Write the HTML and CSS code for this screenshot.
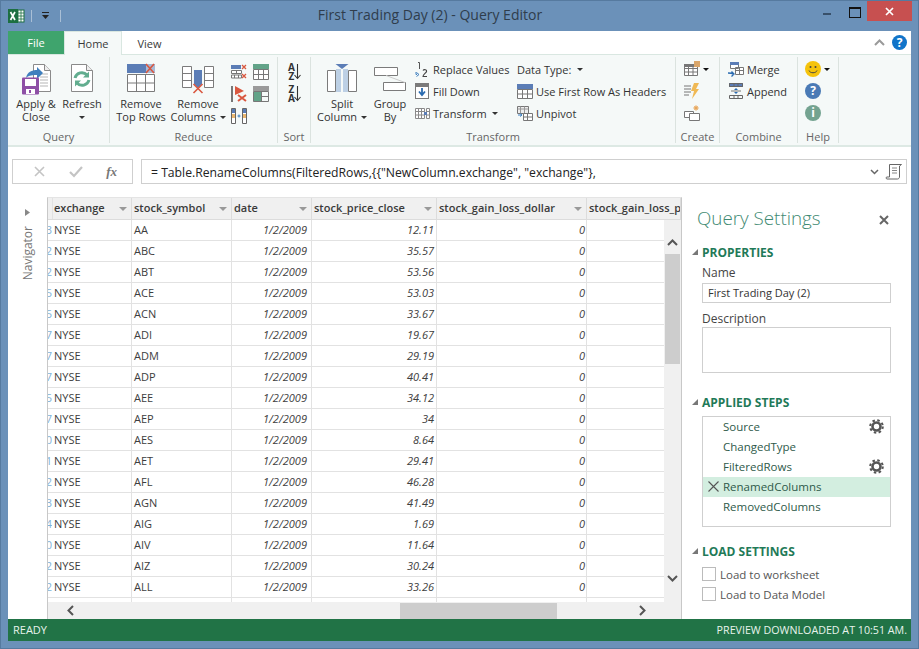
FILE: index.html
```html
<!DOCTYPE html>
<html lang="en">
<head>
<meta charset="utf-8">
<title>First Trading Day (2) - Query Editor</title>
<link rel="stylesheet" href="styles.css">
</head>
<body>
<div class="app">
  <header class="titlebar">
    <div class="qat">
      <svg class="xl" width="17" height="16" viewBox="0 0 17 16"><rect x="6" y="2" width="10" height="12" fill="#fff" stroke="#1d6f42"/><path d="M10 2v12M13 2v12M6 5h10M6 8h10M6 11h10" stroke="#1d6f42" stroke-width=".8"/><rect x="0" y="1" width="10" height="14" fill="#1d6f42"/><path d="M2.500 4l4.500 8M7 4l-4.500 8" stroke="#fff" stroke-width="1.700"/></svg>
      <span class="qat-sep"></span>
      <svg width="9" height="8" viewBox="0 0 9 8"><path d="M1 0h7v1H1zM1 3h7L4.500 7z" fill="#222"/></svg>
      <span class="qat-sep second"></span>
    </div>
    <div class="title">First Trading Day (2) - Query Editor</div>
    <div class="winbtns">
      <span class="wb min"></span>
      <span class="wb max"></span>
      <span class="wb close"><svg width="9" height="9" viewBox="0 0 9 9"><path d="M1 1l7 7M8 1L1 8" stroke="#fff" stroke-width="1.700"/></svg></span>
    </div>
  </header>

  <div class="inner">
    <nav class="tabs">
      <span class="tab file">File</span>
      <span class="tab home">Home</span>
      <span class="tab view">View</span>
      <span class="tabs-right">
        <svg width="11" height="7" viewBox="0 0 11 7"><path d="M1 6l4.500-4.500L10 6" fill="none" stroke="#9a9a9a" stroke-width="2"/></svg>
        <span class="help-round">?</span>
      </span>
    </nav>

    <section class="ribbon">
      <div class="group g-query">
        <div class="gbody">
          <div class="large w46">
            <svg class="licon" width="32" height="32" viewBox="0 0 32 32"><path d="M13.500 1.500h11l6 6v21h-17z" fill="#fff" stroke="#8a8a8a"/><path d="M24.500 1.500v6h6" fill="#eee" stroke="#8a8a8a"/><path d="M20 11h8M20 14h8M20 17h8M20 20h8M20 23h8" stroke="#b5b5b5"/><path d="M6 15c1-6 6-8 11-8V4l6 6-6 6v-4c-4 0-8 0-11 3z" fill="#3f7fbe"/><rect x="2" y="14.500" width="17" height="17" rx="1" fill="#8e4fa6"/><rect x="5" y="16" width="11" height="7" fill="#fff"/><rect x="6" y="26" width="9" height="5" fill="#fff"/><rect x="9" y="27" width="2" height="3" fill="#8e4fa6"/></svg>
            <span class="ltext">Apply &amp;<br>Close</span>
          </div>
          <div class="large w46">
            <svg class="licon" width="32" height="32" viewBox="0 0 32 32"><path d="M5.500 1.500h15l6 6v21h-21z" fill="#fff" stroke="#8a8a8a"/><path d="M20.500 1.500v6h6" fill="#eee" stroke="#8a8a8a"/><path d="M9 15a7 7 0 0 1 12-3" fill="none" stroke="#62ad8f" stroke-width="3"/><path d="M23 8.500v6h-6z" fill="#62ad8f"/><path d="M23 17a7 7 0 0 1-12 3" fill="none" stroke="#62ad8f" stroke-width="3"/><path d="M9 23.500v-6h6z" fill="#62ad8f"/></svg>
            <span class="ltext">Refresh<br><i class="caret"></i></span>
          </div>
        </div>
        <div class="glabel">Query</div>
      </div>

      <div class="group g-reduce">
        <div class="gbody">
          <div class="large w62">
            <svg class="licon" width="32" height="32" viewBox="0 0 32 32"><rect x="2" y="1" width="19" height="9" fill="#5b7db6"/><rect x="21" y="1" width="9" height="9" fill="#5b7db6" opacity=".5"/><path d="M21 1l8 9M29 1l-8 9" stroke="#d9573f" stroke-width="1.600"/><path d="M2.500 11.500h27v17h-27zM2.500 20h27M11.500 11.500v17M20.500 11.500v17" fill="#fff" stroke="#7b7b7b"/></svg>
            <span class="ltext">Remove<br>Top Rows</span>
          </div>
          <div class="large w52">
            <svg class="licon" width="32" height="32" viewBox="0 0 32 32"><path d="M.500 3.500h9v21h-9zM.500 10.500h9M.500 17.500h9M22.500 3.500h9v21h-9zM22.500 10.500h9M22.500 17.500h9" fill="#fff" stroke="#7b7b7b"/><path d="M12 7h8v14l-4 4-4-4z" fill="#5b7db6"/><path d="M11.500 21l9 9M20.500 21l-9 9" stroke="#d9573f" stroke-width="1.600"/></svg>
            <span class="ltext">Remove<br>Columns <i class="caret inline"></i></span>
          </div>
          <div class="mini-grid">
            <svg width="16" height="16" viewBox="0 0 16 16"><rect x="0" y="1" width="10" height="4" fill="#5b7db6"/><path d="M11 1l4 4M15 1l-4 4M11 10l4 4M15 10l-4 4" stroke="#d9573f" stroke-width="1.300"/><path d="M.500 6.500h10v3H.500zM.500 11h10v3H.500zM5.500 6.500v3M3.500 11v3M7.500 11v3" fill="#fff" stroke="#777"/></svg>
            <svg width="16" height="16" viewBox="0 0 16 16"><rect x="0" y="0" width="16" height="5" fill="#62a388"/><path d="M.500 5.500h15v10H.500zM.500 10.500h15M5.500 5.500v10M10.500 5.500v10" fill="#fff" stroke="#777"/></svg>
            <svg width="16" height="16" viewBox="0 0 16 16"><rect x="0" y="0" width="2" height="16" fill="#777"/><path d="M4 0l9 5-9 4z" fill="#d9573f"/><path d="M7 9l8 6M15 9l-8 6" stroke="#d9573f" stroke-width="2"/></svg>
            <svg width="16" height="16" viewBox="0 0 16 16"><rect x="0" y="0" width="16" height="5" fill="#9a9a9a"/><rect x=".5" y="5.500" width="8" height="10" fill="#62a388"/><path d="M.500 5.500h15v10H.500zM8.500 5.500v10M8.500 10.500h7" fill="none" stroke="#777"/></svg>
            <svg width="16" height="16" viewBox="0 0 16 16"><path d="M.500.500h4v15h-4zM11.500.500h4v15h-4z" fill="#fff" stroke="#666"/><path d="M1 1h3v4H1zM12 1h3v4h-3z" fill="#5b7db6"/><path d="M1 6h3v4H1zM12 6h3v4h-3z" fill="#eab66f"/><path d="M6.500 8h3M8 6.500v3" stroke="#3f7fbe"/></svg>
          </div>
        </div>
        <div class="glabel">Reduce</div>
      </div>

      <div class="group g-sort">
        <div class="gbody">
          <div class="sort-icons">
            <svg width="15" height="17" viewBox="0 0 15 17"><path d="M10.500 1v14M7.500 12l3 3.500 3-3.500" fill="none" stroke="#333" stroke-width="1.100"/></svg>
            <svg width="15" height="17" viewBox="0 0 15 17"><path d="M10.500 1v14M7.500 12l3 3.500 3-3.500" fill="none" stroke="#333" stroke-width="1.100"/></svg>
            <span class="az one">A<br>Z</span>
            <span class="az two">Z<br>A</span>
          </div>
        </div>
        <div class="glabel">Sort</div>
      </div>

      <div class="group g-transform">
        <div class="gbody">
          <div class="large w46">
            <svg class="licon" width="32" height="32" viewBox="0 0 32 32"><path d="M1.500 7.500h8v21h-8zM22.500 7.500h8v21h-8z" fill="#fff" stroke="#7b7b7b"/><rect x="10" y="6" width="5" height="23" fill="#bdd0e5"/><rect x="17" y="6" width="5" height="23" fill="#bdd0e5"/><path d="M9.500 1h13L16 6z" fill="#5b7db6"/></svg>
            <span class="ltext">Split<br>Column <i class="caret inline"></i></span>
          </div>
          <div class="large w50">
            <svg class="licon" width="32" height="32" viewBox="0 0 32 32"><path d="M.500 4.500h23v8h-23zM9.500 19.500h22v8h-22z" fill="#fff" stroke="#7b7b7b"/><path d="M12 12.500l19 7" stroke="#ccc"/></svg>
            <span class="ltext">Group<br>By</span>
          </div>
          <div class="slist c1">
            <div class="sitem"><span class="sicon"><svg width="14" height="15" viewBox="0 0 14 15"><path d="M3 .500h1.500V7" fill="none" stroke="#555"/><path d="M1.500 14.500l2.500-2-2.500-2M2 12.500h-1V10" fill="none" stroke="#3f7fbe"/><path d="M8 8.500c1-1.500 4-1 3.500 1-.4 1.500-3.500 3-3.500 5h4" fill="none" stroke="#444" stroke-width="1.100"/></svg></span>Replace Values</div>
            <div class="sitem"><span class="sicon"><svg width="14" height="16" viewBox="0 0 14 16"><rect x="0" y="0" width="14" height="3" fill="#7b7b7b"/><rect x=".5" y="3.500" width="13" height="12" fill="#fff" stroke="#7b7b7b"/><path d="M7 5v6M4 8.500l3 3.500 3-3.500" fill="none" stroke="#2a6bb0" stroke-width="1.800"/></svg></span>Fill Down</div>
            <div class="sitem"><span class="sicon"><svg width="15" height="11" viewBox="0 0 15 11"><path d="M.500.500h9v10h-9zM.500 3.500h9M.500 7h9M3.500.500v10M6.500.500v10M11.500.500h3v10h-3zM11.500 3.500h3M11.500 7h3" fill="#fff" stroke="#8a8a8a"/><rect x="9" y="4" width="3" height="3" fill="#5b7db6"/></svg></span>Transform <i class="caret inline"></i></div>
          </div>
          <div class="slist c2">
            <div class="sitem">Data Type: <i class="caret inline dt"></i></div>
            <div class="sitem"><span class="sicon wide"><svg width="16" height="15" viewBox="0 0 16 15"><rect x="0" y="0" width="16" height="5" fill="#5b7db6"/><path d="M.500 5.500h15v9H.500zM.500 10h15M5.500 5.500v9M10.500 5.500v9" fill="#fff" stroke="#777"/></svg></span>Use First Row As Headers</div>
            <div class="sitem"><span class="sicon wide"><svg width="16" height="15" viewBox="0 0 16 15"><path d="M.500.500h11v7H.500z" fill="#eee" stroke="#777"/><path d="M.500 3h11M3.500.500v7M7.500.500v7" stroke="#999"/><path d="M6.500 7.500h9v7h-9zM6.500 11h9M10.500 7.500v7" fill="#fff" stroke="#777"/><path d="M1 9h4M3 7.500L5 9l-2 1.500" fill="none" stroke="#3f7fbe"/></svg></span>Unpivot</div>
          </div>
        </div>
        <div class="glabel">Transform</div>
      </div>

      <div class="group g-create">
        <div class="gbody">
          <div class="slist">
            <div class="sitem"><span class="sicon ci"><svg width="16" height="16" viewBox="0 0 16 16"><path d="M.500 3.500h13v11H.500zM.500 7.500h13M.500 11h13M4.500 3.500v11M9 3.500v11" fill="#fff" stroke="#777"/><rect x="0" y="3" width="14" height="3" fill="#777"/><rect x="10" y="0" width="6" height="6" fill="#d9a66b"/></svg></span><i class="caret inline dark"></i></div>
            <div class="sitem"><span class="sicon ci"><svg width="16" height="16" viewBox="0 0 16 16"><path d="M0 3h7M0 6h7M0 9h7M0 12h5" stroke="#777"/><path d="M10 0h5l-3 6h3L8 16l2-8H7z" fill="#f0b954"/></svg></span></div>
            <div class="sitem"><span class="sicon ci"><svg width="16" height="16" viewBox="0 0 16 16"><path d="M.500 6.500h9v6H.500z" fill="#fff" stroke="#777"/><path d="M5.500 8.500h10v7h-10z" fill="#fff" stroke="#777"/><circle cx="12" cy="3" r="1.800" fill="#e8a75c"/><path d="M12 0v6M9 3h6M10 1l4 4M14 1l-4 4" stroke="#e8a75c" stroke-width=".7"/></svg></span></div>
          </div>
        </div>
        <div class="glabel">Create</div>
      </div>

      <div class="group g-combine">
        <div class="gbody">
          <div class="slist">
            <div class="sitem"><span class="sicon cb"><svg width="16" height="15" viewBox="0 0 16 15"><rect x="2" y="0" width="8" height="3" fill="#5b7db6"/><path d="M2.500.500h8v6h-8zM7.500 5.500h8v7h-8zM7.500 8.500h8M11.500 5.500v7" fill="#fff" stroke="#777"/><rect x="2" y="0" width="9" height="3" fill="#5b7db6"/><path d="M0 11c3 0 4 0 5 1M3.500 9.500L6 12l-2.500 2.500" fill="none" stroke="#2a6bb0" stroke-width="1.300"/></svg></span>Merge</div>
            <div class="sitem"><span class="sicon cb"><svg width="16" height="16" viewBox="0 0 16 16"><rect x="1" y="0" width="14" height="4" fill="#5b7db6"/><path d="M1.500.500h13v3h-13zM1.500 12.500h13v3h-13zM6 .500v3M10 .500v3M6 12.500v3M10 12.500v3" fill="none" stroke="#666"/><path d="M8 5l2 2H6zM8 11l2-2H6z" fill="#2a6bb0"/><path d="M3 8h10" stroke="#777"/></svg></span>Append</div>
          </div>
        </div>
        <div class="glabel">Combine</div>
      </div>

      <div class="group g-help">
        <div class="gbody">
          <div class="slist">
            <div class="sitem"><span class="sicon hi"><svg width="16" height="16" viewBox="0 0 16 16"><circle cx="8" cy="8" r="8" fill="#f5c30b"/><circle cx="5.500" cy="6" r="1" fill="#444"/><circle cx="10.500" cy="6" r="1" fill="#444"/><path d="M4 9.500c1 3 7 3 8 0" fill="none" stroke="#444"/></svg></span><i class="caret inline dark"></i></div>
            <div class="sitem"><span class="round-icon blue">?</span></div>
            <div class="sitem"><span class="round-icon green">i</span></div>
          </div>
        </div>
        <div class="glabel">Help</div>
      </div>
    </section>

    <section class="formula">
      <div class="fbtns">
        <svg width="11" height="11" viewBox="0 0 11 11"><path d="M1 1l9 9M10 1l-9 9" stroke="#c4c4c4" stroke-width="1.600"/></svg>
        <svg width="14" height="12" viewBox="0 0 14 12"><path d="M1 6l4 4 8-9" fill="none" stroke="#c4c4c4" stroke-width="2.200"/></svg>
        <span class="fx">fx</span>
      </div>
      <div class="fbox">
        <span class="ftext">= Table.RenameColumns(FilteredRows,{{"NewColumn.exchange", "exchange"},</span>
        <svg class="fchev" width="9" height="6" viewBox="0 0 9 6"><path d="M1 1l3.500 3.500L8 1" fill="none" stroke="#666" stroke-width="1.500"/></svg>
        <svg class="fscroll" width="17" height="16" viewBox="0 0 17 16"><path d="M4.500.500h12l-2 1.500v11c0 1-1 2-2 2H2c-1 0-1.500-2 0-2h2.500z" fill="#fff" stroke="#666"/><path d="M7 4h5M7 6.500h5M7 9h5" stroke="#888"/></svg>
      </div>
    </section>

    <main class="main">
      <aside class="nav">
        <svg class="nav-chev" width="5" height="7" viewBox="0 0 5 7"><path d="M0 0l5 3.500L0 7z" fill="#888"/></svg>
        <span class="nav-text">Navigator</span>
      </aside>

      <section class="grid">
        <div class="row head">
          <div></div>
          <div class="hc">exchange<i class="filt"></i></div>
          <div class="hc">stock_symbol<i class="filt"></i></div>
          <div class="hc">date<i class="filt"></i></div>
          <div class="hc">stock_price_close<i class="filt"></i></div>
          <div class="hc">stock_gain_loss_dollar<i class="filt"></i></div>
          <div class="hc">stock_gain_loss_percent</div>
        </div>
        <div class="gmid">
          <div class="rows">
            <div class="row"><div class="rn">3</div><div>NYSE</div><div>AA</div><div class="it">1/2/2009</div><div class="it">12.11</div><div class="it">0</div><div></div></div>
            <div class="row"><div class="rn">2</div><div>NYSE</div><div>ABC</div><div class="it">1/2/2009</div><div class="it">35.57</div><div class="it">0</div><div></div></div>
            <div class="row"><div class="rn">2</div><div>NYSE</div><div>ABT</div><div class="it">1/2/2009</div><div class="it">53.56</div><div class="it">0</div><div></div></div>
            <div class="row"><div class="rn">5</div><div>NYSE</div><div>ACE</div><div class="it">1/2/2009</div><div class="it">53.03</div><div class="it">0</div><div></div></div>
            <div class="row"><div class="rn">5</div><div>NYSE</div><div>ACN</div><div class="it">1/2/2009</div><div class="it">33.67</div><div class="it">0</div><div></div></div>
            <div class="row"><div class="rn">7</div><div>NYSE</div><div>ADI</div><div class="it">1/2/2009</div><div class="it">19.67</div><div class="it">0</div><div></div></div>
            <div class="row"><div class="rn">7</div><div>NYSE</div><div>ADM</div><div class="it">1/2/2009</div><div class="it">29.19</div><div class="it">0</div><div></div></div>
            <div class="row"><div class="rn">7</div><div>NYSE</div><div>ADP</div><div class="it">1/2/2009</div><div class="it">40.41</div><div class="it">0</div><div></div></div>
            <div class="row"><div class="rn">5</div><div>NYSE</div><div>AEE</div><div class="it">1/2/2009</div><div class="it">34.12</div><div class="it">0</div><div></div></div>
            <div class="row"><div class="rn">7</div><div>NYSE</div><div>AEP</div><div class="it">1/2/2009</div><div class="it">34</div><div class="it">0</div><div></div></div>
            <div class="row"><div class="rn">0</div><div>NYSE</div><div>AES</div><div class="it">1/2/2009</div><div class="it">8.64</div><div class="it">0</div><div></div></div>
            <div class="row"><div class="rn">1</div><div>NYSE</div><div>AET</div><div class="it">1/2/2009</div><div class="it">29.41</div><div class="it">0</div><div></div></div>
            <div class="row"><div class="rn">2</div><div>NYSE</div><div>AFL</div><div class="it">1/2/2009</div><div class="it">46.28</div><div class="it">0</div><div></div></div>
            <div class="row"><div class="rn">3</div><div>NYSE</div><div>AGN</div><div class="it">1/2/2009</div><div class="it">41.49</div><div class="it">0</div><div></div></div>
            <div class="row"><div class="rn">4</div><div>NYSE</div><div>AIG</div><div class="it">1/2/2009</div><div class="it">1.69</div><div class="it">0</div><div></div></div>
            <div class="row"><div class="rn">0</div><div>NYSE</div><div>AIV</div><div class="it">1/2/2009</div><div class="it">11.64</div><div class="it">0</div><div></div></div>
            <div class="row"><div class="rn">2</div><div>NYSE</div><div>AIZ</div><div class="it">1/2/2009</div><div class="it">30.24</div><div class="it">0</div><div></div></div>
            <div class="row"><div class="rn">2</div><div>NYSE</div><div>ALL</div><div class="it">1/2/2009</div><div class="it">33.26</div><div class="it">0</div><div></div></div>
            <div class="row"><div class="rn"></div><div></div><div></div><div></div><div></div><div></div><div></div></div>
          </div>
          <div class="vscroll">
            <svg class="vup" width="11" height="7" viewBox="0 0 11 7"><path d="M1 6l4.500-4.500L10 6" fill="none" stroke="#555" stroke-width="2"/></svg>
            <div class="vthumb"></div>
            <svg class="vdn" width="11" height="7" viewBox="0 0 11 7"><path d="M1 1l4.500 4.500L10 1" fill="none" stroke="#555" stroke-width="2"/></svg>
          </div>
        </div>
        <div class="hscroll">
          <svg class="hl" width="7" height="11" viewBox="0 0 7 11"><path d="M6 1L1.500 5.500 6 10" fill="none" stroke="#555" stroke-width="2"/></svg>
          <div class="hthumb"></div>
          <svg class="hr" width="7" height="11" viewBox="0 0 7 11"><path d="M1 1l4.500 4.500L1 10" fill="none" stroke="#555" stroke-width="2"/></svg>
        </div>
      </section>

      <aside class="panel">
        <div class="ptitle"><span>Query Settings</span><svg width="10" height="10" viewBox="0 0 10 10"><path d="M1 1l8 8M9 1L1 9" stroke="#666" stroke-width="2"/></svg></div>
        <h2 class="sec s-prop">PROPERTIES</h2>
        <div class="flabel">Name</div>
        <div class="input">First Trading Day (2)</div>
        <div class="flabel desc">Description</div>
        <div class="textarea"></div>
        <h2 class="sec s-steps">APPLIED STEPS</h2>
        <div class="steps">
          <div class="step">Source<svg class="gear" width="15" height="15" viewBox="0 0 15 15"><circle cx="7.500" cy="7.500" r="4" fill="none" stroke="#555" stroke-width="2.600"/><circle cx="7.500" cy="7.500" r="6.300" fill="none" stroke="#555" stroke-width="2" stroke-dasharray="2.500 2.450"/></svg></div>
          <div class="step">ChangedType</div>
          <div class="step">FilteredRows<svg class="gear" width="15" height="15" viewBox="0 0 15 15"><circle cx="7.500" cy="7.500" r="4" fill="none" stroke="#555" stroke-width="2.600"/><circle cx="7.500" cy="7.500" r="6.300" fill="none" stroke="#555" stroke-width="2" stroke-dasharray="2.500 2.450"/></svg></div>
          <div class="step sel"><svg class="del" width="11" height="11" viewBox="0 0 11 11"><path d="M.500.500l10 10M10.500.500l-10 10" stroke="#555" stroke-width="1.100"/></svg>RenamedColumns</div>
          <div class="step">RemovedColumns</div>
        </div>
        <h2 class="sec s-load">LOAD SETTINGS</h2>
        <div class="check"><span class="box"></span>Load to worksheet</div>
        <div class="check"><span class="box"></span>Load to Data Model</div>
      </aside>
    </main>

    <footer class="status"><span class="st-left">READY</span><span class="st-right">PREVIEW DOWNLOADED AT 10:51 AM.</span></footer>
  </div>
</div>
</body>
</html>
```
FILE: styles.css
```css
* { box-sizing: border-box; }
html, body { margin: 0; padding: 0; }
body { width: 919px; height: 649px; overflow: hidden; background: #6b91b9; font-family: "Open Sans", "Noto Sans", sans-serif; font-size: 11px; color: #3a3a3a; }
.app { width: 919px; height: 649px; display: flex; flex-direction: column; border: 1px solid #567a9f; }

.titlebar { height: 30px; display: flex; align-items: flex-start; padding-left: 7px; flex: none; position: relative; }
.qat { display: flex; align-items: center; height: 16px; margin-top: 7px; width: 60px; }
.qat-sep { width: 1px; height: 12px; background: #a9bfd6; margin: 0 9px 0 6px; }
.qat-sep.second { margin: 0 0 0 10px; }
.title { flex: 1; text-align: center; font-size: 14px; line-height: 28px; color: #2f3d4c; padding-right: 21px; }
.winbtns { display: flex; height: 20px; margin-right: 6px; }
.wb { display: block; width: 27px; position: relative; }
.min::after { content: ""; position: absolute; left: 10px; top: 12px; width: 8px; height: 2px; background: #38506a; }
.max::after { content: ""; position: absolute; left: 9px; top: 6px; width: 10px; height: 8px; border: 1px solid #111; border-top-width: 2px; }
.close { width: 45px; background: #c75050; display: flex; align-items: center; justify-content: center; }

.inner { width: 903px; margin-left: 7px; height: 610px; background: #fff; display: flex; flex-direction: column; flex: none; }

.tabs { height: 23px; display: flex; flex: none; background: #fff; position: relative; }
.tab { display: block; line-height: 24px; text-align: center; }
.file { width: 56px; background: #3fa46d; color: #fff; font-size: 11px; }
.home { width: 58px; border: 1px solid #d9e7e1; border-bottom: 0; background: #f5f9f8; line-height: 23px; height: 24px; position: relative; z-index: 1; }
.view { width: 55px; line-height: 26px; }
.tabs-right { margin-left: auto; display: flex; align-items: center; gap: 7px; padding-right: 4px; }
.help-round { width: 15px; height: 15px; border-radius: 50%; background: #1174c9; color: #fff; font-weight: 700; font-size: 12px; line-height: 15px; text-align: center; }

.ribbon { height: 93px; flex: none; display: flex; background: #f5f9f8; border-top: 1px solid #d9e7e1; border-bottom: 2px solid #dde9e4; padding-top: 2px; line-height: 13px; color: #333; }
.group { height: 86px; border-right: 1px solid #dbe3df; display: flex; flex-direction: column; flex: none; }
.gbody { flex: 1; display: flex; padding-top: 2px; min-height: 0; }
.glabel { height: 14px; line-height: 15px; text-align: center; color: #666; flex: none; }
.g-query { width: 102px; }
.g-query .gbody { padding-left: 5px; }
.g-reduce { width: 168px; }
.g-sort { width: 33px; }
.g-transform { width: 365px; }
.g-transform .gbody { padding-left: 8px; }
.g-create { width: 44px; }
.g-create .gbody { padding-left: 8px; }
.g-combine { width: 78px; }
.g-combine .gbody { padding-left: 8px; }
.g-help { width: 41px; }
.g-help .gbody { padding-left: 7px; }

.large { display: flex; flex-direction: column; align-items: center; margin-top: 4px; flex: none; }
.w46 { width: 46px; }
.w50 { width: 50px; }
.w52 { width: 52px; }
.w62 { width: 62px; }
.licon { display: block; height: 32px; margin-bottom: 2px; flex: none; }
.ltext { text-align: center; white-space: nowrap; display: block; }
.caret { display: inline-block; width: 0; height: 0; border: 3px solid transparent; border-top: 3px solid #333; border-bottom: 0; vertical-align: 2px; }
.caret.inline { margin-left: 1px; }
.caret.dark { border-top-color: #111; }

.mini-grid { display: grid; grid-template-columns: 16px 16px; column-gap: 6px; row-gap: 6px; grid-auto-rows: 16px; margin: 5px 0 0 7px; height: 62px; }

.sort-icons { position: relative; width: 32px; height: 60px; margin-top: 2px; }
.sort-icons svg { position: absolute; left: 9px; top: 2px; }
.sort-icons svg + svg { top: 24px; }
.az { position: absolute; left: 9px; width: 9px; font-size: 10px; line-height: 8.500px; font-weight: 700; color: #333; text-align: center; }
.az.one { top: 2px; }
.az.two { top: 24px; }

.slist { display: flex; flex-direction: column; flex: none; margin-top: -1px; }
.c2 { width: 158px; }
.c1 { width: 102px; }
.sitem { height: 22px; display: flex; align-items: center; white-space: nowrap; }
.sitem .caret.inline { margin-left: 5px; }
.g-create .sitem .caret.inline, .g-help .sitem .caret.inline { margin-left: 2px; }
.c2 .sitem .caret.dt { margin-left: 6px; }
.sicon { width: 18px; display: flex; align-items: center; flex: none; }
.sicon.wide { width: 19px; }
.sicon.ci { width: 17px; }
.sicon.cb { width: 19px; }
.sicon.hi { width: 17px; }
.round-icon { width: 16px; height: 16px; border-radius: 50%; color: #fff; font-weight: 700; font-size: 12px; line-height: 16px; text-align: center; display: block; }
.blue { background: #4a7ab5; }
.green { background: #74a390; }

.formula { height: 50px; flex: none; display: flex; align-items: flex-start; padding: 12px 4px 0 4px; background: #fff; }
.fbtns { width: 121px; height: 25px; border: 1px solid #cfcfcf; display: flex; align-items: center; justify-content: space-between; padding: 0 15px 0 21px; flex: none; }
.fx { font-family: "Liberation Serif", serif; font-style: italic; font-weight: 700; color: #777; font-size: 13px; }
.fbox { flex: 1; margin-left: 8px; height: 25px; border: 1px solid #cfcfcf; display: flex; align-items: center; padding: 0 4px 0 9px; }
.ftext { flex: 1; font-size: 12.200px; line-height: 25px; padding-top: 1px; color: #222; white-space: nowrap; }
.fchev { margin-right: 6px; }

.main { flex: 1; display: flex; min-height: 0; }
.nav { width: 39px; flex: none; display: flex; flex-direction: column; align-items: center; padding-top: 12px; background: #fff; }
.nav-chev { display: block; margin-bottom: 10px; }
.nav-text { writing-mode: vertical-rl; transform: rotate(180deg); font-size: 12px; color: #777; line-height: 14px; }

.grid { width: 635px; flex: none; border-left: 1px solid #c8c8c8; border-right: 1px solid #c8c8c8; border-top: 1px solid #e4e4e4; display: flex; flex-direction: column; overflow: hidden; background: #fff; }
.row { display: grid; grid-template-columns: 4px 80px 100px 80px 125px 150px 94px; height: 21px; line-height: 20px; border-bottom: 1px solid #e2e2e2; color: #3d3d3d; flex: none; width: 633px; }
.row > div { border-right: 1px solid #e2e2e2; padding: 0 2px; white-space: nowrap; overflow: hidden; }
.row > .rn { padding: 0; border-right: 0; color: #7fb2d8; display: flex; justify-content: flex-end; }
.row > .it { font-style: italic; text-align: right; padding-right: 3px; }
.row > .it:nth-child(4) { padding-right: 4px; }
.row > .it:nth-child(5) { padding-right: 2px; }
.row > .it:nth-child(6) { padding-right: 1px; }
.head { height: 22px; background: #f0f0f0; border-bottom: 1px solid #dcdcdc; font-weight: 600; color: #3a3a3a; line-height: 19px; }
.row > .hc { position: relative; border-right-color: #dcdcdc; padding-right: 0; }
.filt { position: absolute; right: 4px; top: 9px; width: 0; height: 0; border: 4px solid transparent; border-top: 4px solid #999; border-bottom: 0; }
.gmid { height: 382px; display: flex; flex: none; }
.rows { width: 616px; flex: none; overflow: hidden; }
.vscroll { width: 17px; flex: none; background: #f0f0f0; position: relative; display: flex; flex-direction: column; align-items: center; padding-top: 19px; }
.vup { display: block; }
.vthumb { width: 15px; height: 110px; background: #cdcdcd; margin-top: 8px; }
.vdn { display: block; margin-top: 211px; }
.hscroll { height: 17px; flex: none; background: #f0f0f0; display: flex; align-items: center; padding-left: 19px; }
.hthumb { width: 157px; height: 16px; background: #cdcdcd; margin-left: 326px; }
.hr { margin-left: 82px; }

.panel { flex: 1; padding: 8px 20px 0 20px; min-width: 0; background: #fff; }
.ptitle { display: flex; justify-content: space-between; align-items: center; margin-left: -5px; height: 26px; font-size: 18.800px; font-weight: 300; color: #3f8a73; margin-right: -13px; }
.ptitle svg { margin-right: 15px; margin-top: 4px; }
.sec { position: relative; margin: 0; font-size: 12px; line-height: 16px; font-weight: 700; color: #1f7a58; }
.sec::before { content: ""; position: absolute; left: -10px; top: 4px; width: 0; height: 0; border-style: solid; border-width: 0 0 6px 6px; border-color: transparent transparent #777 transparent; }
.s-prop { margin-top: 14px; }
.flabel { font-size: 12px; line-height: 16px; margin-top: 4px; color: #444; }
.flabel.desc { margin-top: 8px; }
.input { width: 189px; height: 20px; margin-top: 2px; border: 1px solid #cfcfcf; padding-left: 5px; line-height: 18px; font-size: 11px; color: #333; }
.textarea { width: 189px; height: 46px; margin-top: 0; border: 1px solid #cfcfcf; }
.s-steps { margin-top: 22px; }
.steps { width: 189px; height: 111px; margin-top: 5px; border: 1px solid #cfcfcf; }
.step { height: 20px; line-height: 20px; padding-left: 20px; font-size: 11.500px; color: #2e5a4a; position: relative; }
.step.sel { background: #d3eee0; }
.gear { position: absolute; right: 6px; top: 2px; }
.del { position: absolute; left: 5px; top: 4px; }
.s-load { margin-top: 17px; }
.check { display: flex; align-items: center; height: 20px; font-size: 11.500px; color: #555; }
.s-load + .check { margin-top: 4px; }
.box { width: 14px; height: 14px; border: 1px solid #bbb; margin-right: 4px; flex: none; }

.status { height: 22px; flex: none; background: #217346; color: #e8f3ed; display: flex; justify-content: space-between; align-items: center; padding: 0 4px 1px 5px; font-size: 11px; }
.st-right { font-size: 10.700px; }
```
